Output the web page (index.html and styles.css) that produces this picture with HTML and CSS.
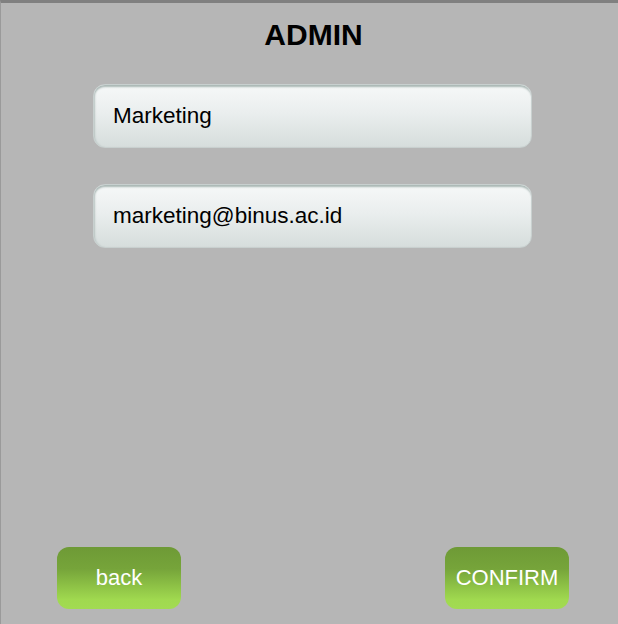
FILE: index.html
```html
<!DOCTYPE html>
<html>
<head>
<meta charset="utf-8">
<link rel="stylesheet" href="styles.css">
</head>
<body>
<div class="screen">
  <h1 class="title">ADMIN</h1>
  <div class="fields">
    <div class="field">Marketing</div>
    <div class="field">marketing@binus.ac.id</div>
  </div>
  <div class="actions">
    <button class="btn">back</button>
    <button class="btn">CONFIRM</button>
  </div>
</div>
</body>
</html>
```
FILE: styles.css
```css
html, body {
  margin: 0;
  padding: 0;
  width: 618px;
  height: 624px;
  overflow: hidden;
  background: #b6b6b6;
  font-family: "Liberation Sans", Arial, sans-serif;
}
.screen {
  box-sizing: border-box;
  height: 624px;
  border-top: 3px solid #808080;
  border-left: 1px solid #9a9a9a;
  display: flex;
  flex-direction: column;
  align-items: center;
}
.title {
  margin: 15px 0 0 0;
  font-size: 30px;
  line-height: 34px;
  font-weight: bold;
  color: #000;
  padding-left: 8px;
}
.fields {
  margin-top: 32px;
  margin-left: 6px;
  display: flex;
  flex-direction: column;
  gap: 36px;
}
.field {
  box-sizing: border-box;
  width: 439px;
  height: 64px;
  border-radius: 12px;
  border: 1px solid #c8d0cf;
  background: linear-gradient(#f6f8f8, #eaeeee 45%, #d6dddc);
  box-shadow: inset 0 3px 2px -1px #a9b7b4, inset 2px 0 2px -1px #b9c4c2;
  font-size: 22.5px;
  color: #000;
  padding-left: 19px;
  display: flex;
  align-items: center;
}
.actions {
  margin-top: auto;
  margin-bottom: 15px;
  align-self: stretch;
  display: flex;
  justify-content: space-between;
  padding: 0 49px 0 56px;
}
.btn {
  width: 124px;
  height: 62px;
  border: none;
  border-radius: 12px;
  background: linear-gradient(#6e9a36, #76a43a 35%, #a0d94f 85%, #a2db52);
  color: #fff;
  font-family: "Liberation Sans", Arial, sans-serif;
  font-size: 22px;
  padding: 0;
}
```
